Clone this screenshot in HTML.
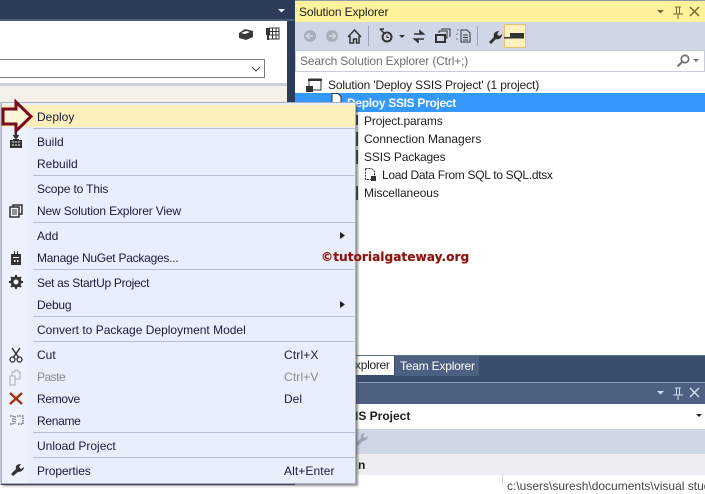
<!DOCTYPE html>
<html><head><meta charset="utf-8"><style>
html,body{margin:0;padding:0}
body{width:705px;height:485px;overflow:hidden;position:relative;background:#fff;font-family:"Liberation Sans",sans-serif;font-size:12px;color:#1e1e1e}
.a{position:absolute}
.t{position:absolute;white-space:nowrap;line-height:16px;color:#1a1a3a}
.s{position:absolute;left:33px;width:322px;height:1px;background:#b9bfd0}
svg{position:absolute;overflow:visible}
</style></head><body>
<div class="a" style="left:0;top:0;width:295px;height:485px;background:#2b3b58"></div>
<div class="a" style="left:0;top:19px;width:294px;height:2px;background:#4d6082"></div>
<div class="a" style="left:0;top:21px;width:287px;height:62px;background:#fff"></div>
<div class="a" style="left:0;top:83px;width:287px;height:3px;background:#ccd0dc"></div>
<div class="a" style="left:0;top:86px;width:287px;height:16px;background:#f5f1ea"></div>
<div class="a" style="left:0;top:59px;width:264px;height:17px;border:1px solid #7a7a7a;border-left:0;background:#fff"></div>
<svg style="left:0;top:0" width="295" height="80"><path d="M278 9h7l-3.500 3.500z" fill="#e8edf5"/><path d="M252 67l4 4 4-4" fill="none" stroke="#444" stroke-width="1"/><path d="M239 33l6-4 8 2v6l-7 3-7-2z" fill="#3a3a3a"/><path d="M241 33l5-2 4 1-5 2z" fill="#fff"/><path d="M269 28h10v11h-10M269 31.500h10M269 35h10M272.500 28v11M276 28v11" fill="none" stroke="#333"/><rect x="266" y="28" width="4" height="7" fill="#333"/><rect x="267" y="35" width="2" height="5" fill="#333"/></svg>

<div class="a" style="left:295px;top:0;width:410px;height:485px;background:#fff"></div>
<div class="a" style="left:295px;top:0;width:410px;height:1px;background:#8f99ad"></div>
<div class="a" style="left:295px;top:1px;width:410px;height:21px;background:#fff29d"></div>
<div class="t" style="left:299px;top:4px;color:#1e1e1e;letter-spacing:-.12px">Solution Explorer</div>
<div class="a" style="left:295px;top:22px;width:410px;height:28px;background:#cfd6e5"></div>
<div class="a" style="left:295px;top:50px;width:408px;height:20px;background:#fff;border:1px solid #c6ccda"></div>
<div class="t" style="left:300px;top:53px;color:#6d6d6d;letter-spacing:-.15px">Search Solution Explorer (Ctrl+;)</div>
<div class="a" style="left:504px;top:24px;width:22px;height:24px;background:#fff0c0;border:1px solid #e5c365;box-sizing:border-box"></div>
<svg style="left:295px;top:0" width="410" height="72">
<circle cx="15" cy="36" r="6" fill="#a9adb5"/><path d="M18 36h-6M14.500 33l-3 3 3 3" stroke="#cfd6e5" stroke-width="1.500" fill="none"/>
<circle cx="37" cy="36" r="6" fill="#a9adb5"/><path d="M34 36h6M37.500 33l3 3-3 3" stroke="#cfd6e5" stroke-width="1.500" fill="none"/>
<path d="M53 37l6.500-7 6.500 7M55 36v7h3.500v-4h3v4H64v-7" fill="none" stroke="#333" stroke-width="1.500"/>
<rect x="73" y="26" width="1" height="20" fill="#9aa2b3"/>
<circle cx="92" cy="37" r="4.500" fill="none" stroke="#333" stroke-width="2"/><path d="M85 29l4 4M85 29h4" stroke="#333" stroke-width="1.500"/><path d="M92 35v2.500h2" stroke="#333" fill="none"/>
<path d="M104 35h6l-3 3z" fill="#333"/>
<path d="M119 34h9M125 31l3.500 3-3.500 0zM129 39h-9M123 42l-3.500-3 3.500 0z" stroke="#333" stroke-width="1.500" fill="#333"/>
<rect x="141" y="35" width="9" height="7" fill="none" stroke="#333" stroke-width="2"/><path d="M144 33v-2h8v7h-1M147 30v-1h8v7h-1" fill="none" stroke="#333"/>
<path d="M166 30h6l3 3v9h-9z" fill="none" stroke="#333"/><path d="M168 35h5M168 37.500h5M168 40h5" stroke="#333"/><path d="M162 30h2M162 33v2M162 38v2" stroke="#777"/>
<rect x="182" y="26" width="1" height="20" fill="#9aa2b3"/>
<path d="M194 42l5-5c-1-3 1-6 5-6l-2 3 2 2 3-2c0 4-3 6-6 5l-5 5z" fill="#2f2f2f"/>
<rect x="215" y="33" width="14" height="4" fill="#333"/><rect x="209" y="37" width="20" height="1.500" fill="#333"/>
<path d="M362 10h7l-3.500 3.500z" fill="#7a6530"/>
<path d="M380 7h6M381.500 7v7h3V7M378 14h10M383 14v5" stroke="#7a6530" fill="none"/>
<path d="M395 7l9 9M404 7l-9 9" stroke="#7a6530" stroke-width="1.500"/>
<circle cx="390" cy="59" r="3.700" fill="none" stroke="#777" stroke-width="1.800"/><path d="M387 62l-4.500 4.500" stroke="#777" stroke-width="2.200"/>
<path d="M398 59h6l-3 3z" fill="#777"/>
</svg>
<div class="a" style="left:295px;top:93px;width:410px;height:19px;background:#3399ff"></div>
<svg style="left:305px;top:76px" width="70" height="40"><rect x="4" y="3" width="12" height="11" fill="#fff" stroke="#333"/><rect x="3" y="3" width="14" height="2" fill="#333"/><rect x="1" y="10" width="7" height="6" fill="#333"/><path d="M27 17.500h6l3 3v9h-9z" fill="#fff" stroke="#333"/><path d="M6 28l5 0" stroke="#222"/></svg>
<div class="t" style="left:328px;top:77px;color:#1e1e1e;letter-spacing:-.15px">Solution 'Deploy SSIS Project' (1 project)</div>
<div class="t" style="left:347px;top:95px;color:#fff;font-weight:bold;letter-spacing:-.3px">Deploy SSIS Project</div>
<div class="t" style="left:364px;top:113px;color:#1e1e1e;letter-spacing:-.15px">Project.params</div>
<div class="t" style="left:364px;top:131px;color:#1e1e1e">Connection Managers</div>
<div class="t" style="left:364px;top:149px;color:#1e1e1e;letter-spacing:-.15px">SSIS Packages</div>
<svg style="left:364px;top:167px" width="14" height="16"><path d="M1.500 1.500h6l3 3v8h-9z" fill="#fff" stroke="#333" stroke-dasharray="2 1"/><rect x="7" y="9" width="5" height="5" fill="#333"/></svg>
<div class="t" style="left:382px;top:167px;color:#1e1e1e;letter-spacing:-.3px">Load Data From SQL to SQL.dtsx</div>
<div class="t" style="left:364px;top:185px;color:#1e1e1e;letter-spacing:-.1px">Miscellaneous</div>
<div class="a" style="left:356px;top:115px;width:2px;height:10px;background:#333"></div>
<div class="a" style="left:356px;top:132px;width:2px;height:14px;background:#333"></div>
<div class="a" style="left:356px;top:150px;width:2px;height:14px;background:#333"></div>
<div class="a" style="left:356px;top:186px;width:2px;height:14px;background:#333"></div>

<div class="a" style="left:295px;top:355px;width:410px;height:27px;background:#394d6e"></div>
<div class="a" style="left:295px;top:355px;width:410px;height:1px;background:#5d6e8c"></div>
<div class="a" style="left:340px;top:356px;width:54px;height:19px;background:#fff"></div>
<div class="t" style="left:355px;top:357px;color:#1e1e1e;letter-spacing:-.3px">xplorer</div>
<div class="a" style="left:395px;top:356px;width:84px;height:20px;background:#4d6082"></div>
<div class="t" style="left:400px;top:358px;color:#fff;letter-spacing:-.2px">Team Explorer</div>
<div class="a" style="left:295px;top:382px;width:410px;height:1px;background:#8c9cb9"></div>
<div class="a" style="left:295px;top:383px;width:410px;height:21px;background:#4d6082"></div>
<div class="a" style="left:295px;top:404px;width:410px;height:25px;background:#fff"></div>
<div class="t" style="left:355px;top:408px;font-weight:bold;color:#1e1e1e">IS Project</div>
<div class="a" style="left:295px;top:429px;width:410px;height:25px;background:#cfd6e5"></div>
<div class="a" style="left:295px;top:454px;width:410px;height:21px;background:#eeeef2"></div>
<div class="t" style="left:358px;top:457px;font-weight:bold;color:#1e1e1e">n</div>
<div class="a" style="left:502px;top:475px;width:1px;height:10px;background:#d8d8d8"></div>
<div class="t" style="left:507px;top:478px;color:#444">c:\users\suresh\documents\visual stud</div>
<svg style="left:295px;top:380px" width="410" height="70">
<path d="M362 11h7l-3.500 3.500z" fill="#d5dcea"/><path d="M380 8h6M381.500 8v7h3V8M378 15h10M383 15v5" stroke="#d5dcea" fill="none"/><path d="M395 8l9 9M404 8l-9 9" stroke="#d5dcea" stroke-width="1.500"/>
<path d="M401 34h6l-3 3z" fill="#222"/>
<path d="M61 63l5-5c-1-3 1-5 4-5l-2 3 2 2 3-2c0 3-3 5-5 5l-5 5z" fill="#a0a6b4"/>
</svg>

<div class="a" style="left:0;top:102px;width:1px;height:383px;background:#c8ccd8"></div>
<div class="a" style="left:1px;top:102px;width:355px;height:382px;background:#e9eefd;border:1px solid #a9b0c4;box-sizing:border-box;box-shadow:2px 2px 2px rgba(70,70,70,.6)"></div>
<div class="a" style="left:2px;top:103px;width:26px;height:380px;background:#eef2fd"></div>
<div class="a" style="left:2px;top:105px;width:353px;height:22px;background:#fdf0bd"></div>

<div class="t" style="left:37px;top:109px">Deploy</div>
<div class="s" style="top:128px"></div>
<div class="t" style="left:37px;top:134px">Build</div>
<div class="t" style="left:37px;top:156px">Rebuild</div>
<div class="s" style="top:175px"></div>
<div class="t" style="left:37px;top:181px;letter-spacing:-.15px">Scope to This</div>
<div class="t" style="left:37px;top:203px;letter-spacing:-.15px">New Solution Explorer View</div>
<div class="s" style="top:222px"></div>
<div class="t" style="left:37px;top:228px">Add</div>
<div class="t" style="left:37px;top:250px;letter-spacing:-.25px">Manage NuGet Packages...</div>
<div class="s" style="top:269px"></div>
<div class="t" style="left:37px;top:275px;letter-spacing:-.3px">Set as StartUp Project</div>
<div class="t" style="left:37px;top:297px;letter-spacing:-.2px">Debug</div>
<div class="s" style="top:316px"></div>
<div class="t" style="left:37px;top:322px">Convert to Package Deployment Model</div>
<div class="s" style="top:341px"></div>
<div class="t" style="left:37px;top:347px">Cut</div>
<div class="t" style="left:284px;top:347px;letter-spacing:.15px">Ctrl+X</div>
<div class="t" style="left:37px;top:369px;color:#8a8a8a;letter-spacing:-.5px">Paste</div>
<div class="t" style="left:284px;top:369px;color:#8a8a8a;letter-spacing:.15px">Ctrl+V</div>
<div class="t" style="left:37px;top:391px;letter-spacing:-.3px">Remove</div>
<div class="t" style="left:284px;top:391px">Del</div>
<div class="t" style="left:37px;top:413px;letter-spacing:-.3px">Rename</div>
<div class="s" style="top:432px"></div>
<div class="t" style="left:37px;top:438px">Unload Project</div>
<div class="s" style="top:457px"></div>
<div class="t" style="left:37px;top:463px;letter-spacing:-.1px">Properties</div>
<div class="t" style="left:284px;top:463px;letter-spacing:.1px">Alt+Enter</div>

<svg style="left:0;top:0" width="360" height="485">
<path d="M340 232l5 3.500-5 3.500zM340 301l5 3.500-5 3.500z" fill="#1e1e1e"/>
<path d="M3 109h13v-7l15 14.500-15 14.500v-7H3z" fill="#fdf6d8" stroke="#7b0a1e" stroke-width="3"/>
<path d="M16 132v5M13.500 135l2.500 3 2.500-3" stroke="#333" stroke-width="2" fill="none"/>
<path d="M10 140h3v-1h6v1h3v8H10z" fill="#333"/><path d="M12 142h2M15 142h2M18 142h2M12 145h2M15 145h2M18 145h2" stroke="#fff"/>
<path d="M10 207h9v10h-9zM13 207v-2h9v9h-3" fill="none" stroke="#333" stroke-width="1.500"/><path d="M12 210h5M12 212h5M12 214h5" stroke="#333"/>
<path d="M11 254h3v-3h1v3h2v-3h1v3h3v11H11z" fill="#333"/><path d="M13 257h6v1h-6zM14 260h1.500v2H14zM17 260h1.500v2H17z" fill="#fff"/>
<circle cx="16" cy="282" r="4" fill="none" stroke="#333" stroke-width="3"/><path d="M16 275v3M16 286v3M9 282h3M20 282h3M11 277l2 2M19 285l2 2M21 277l-2 2M13 285l-2 2" stroke="#333" stroke-width="2"/>
<path d="M12 348l7 10M20 348l-7 10" stroke="#333" stroke-width="1.500"/><circle cx="12.500" cy="359.500" r="2.500" fill="none" stroke="#333" stroke-width="1.300"/><circle cx="19.500" cy="359.500" r="2.500" fill="none" stroke="#333" stroke-width="1.300"/>
<path d="M10 376h5v9h-5zM15 379h5v-7h-2v-2h-3v2h-3v4" fill="none" stroke="#a8acb5"/>
<path d="M10 393l12 11M22 393l-12 11" stroke="#a33311" stroke-width="2.500"/>
<path d="M10 416h3v8h-3M15 416v8M17 416h6v8h-6" fill="none" stroke="#333" stroke-dasharray="1.500 1"/>
<path d="M11 474l5-5c-1-3 1-5 5-5l-2 3 2 2 3-2c0 3-3 5-6 5l-5 4z" fill="#333"/>
</svg>
<div class="t" style="left:321px;top:249px;font:bold 12.200px/16px 'DejaVu Sans',sans-serif;color:#8b0f1c;text-shadow:0 0 1px #c9a24a">©tutorialgateway.org</div>
</body></html>
